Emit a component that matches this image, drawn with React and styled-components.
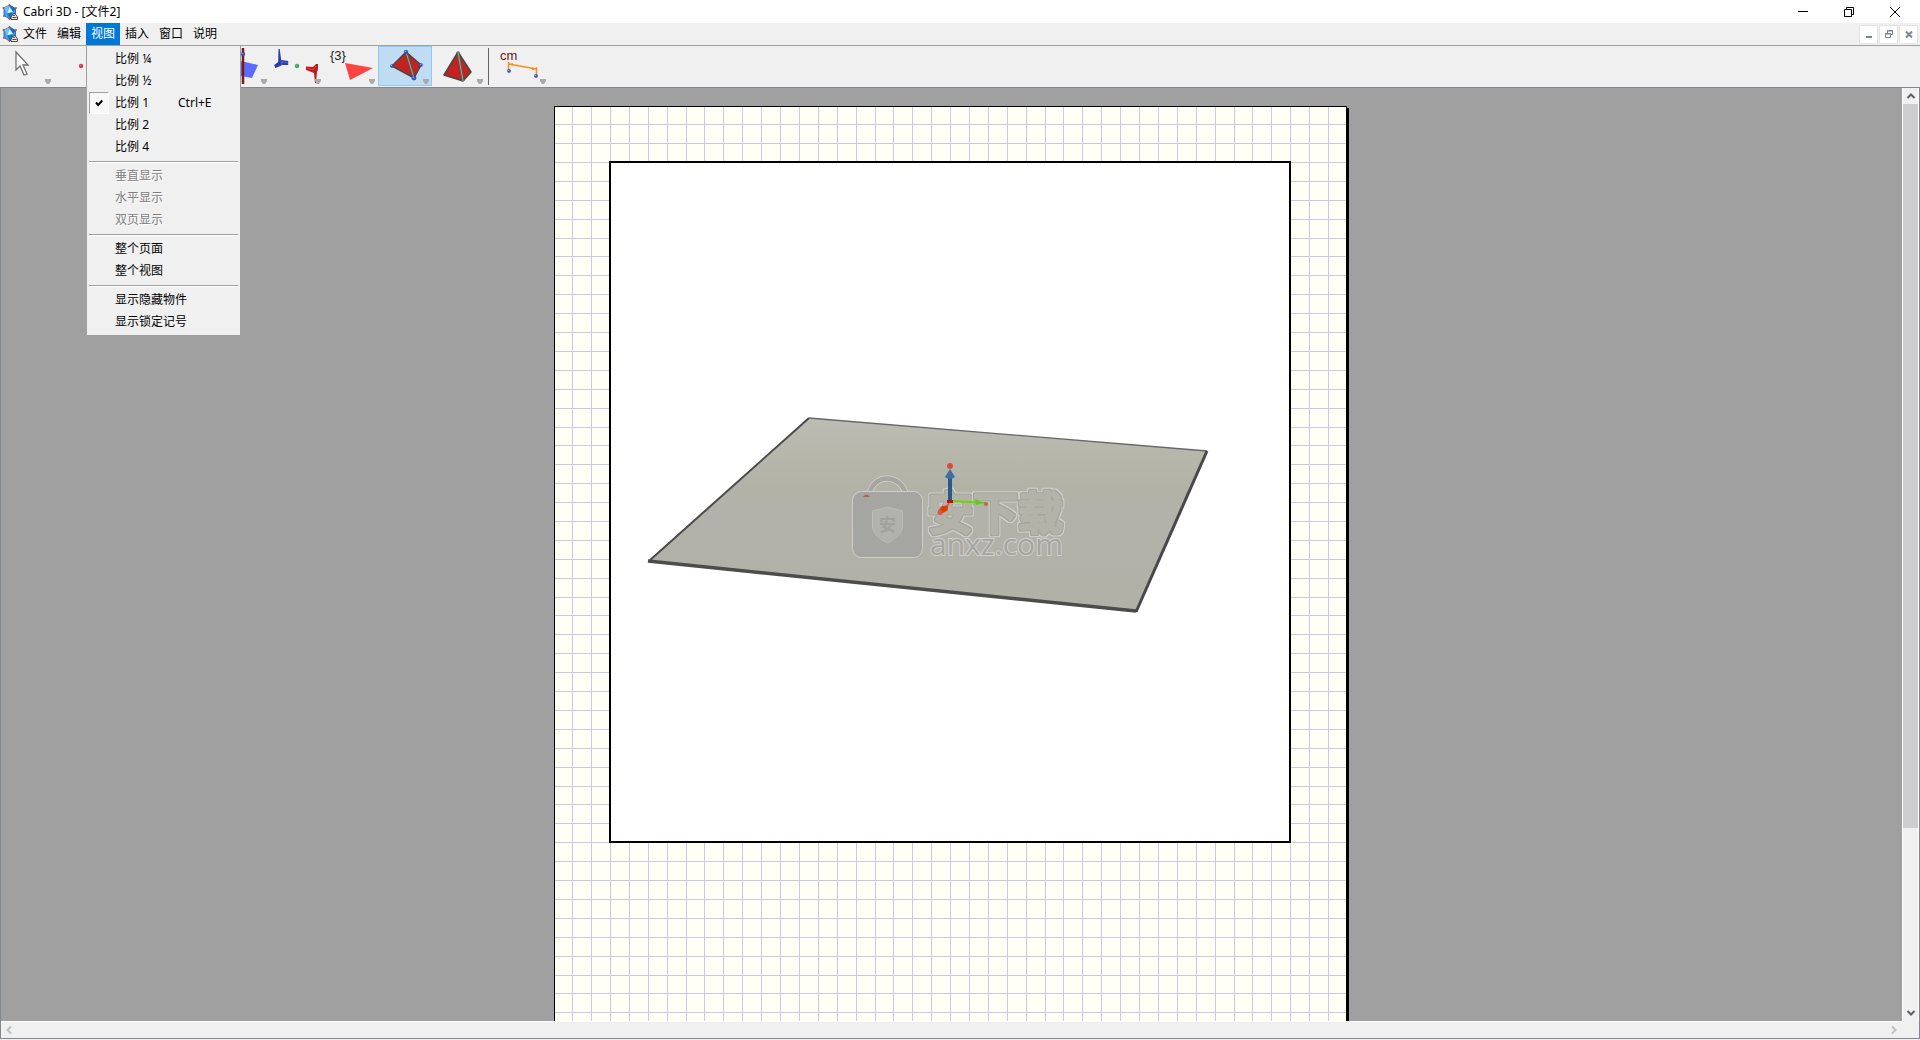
import React from "react";
import styled, { createGlobalStyle, css } from "styled-components";

const Global = createGlobalStyle`
  * { box-sizing: border-box; }
  body {
    margin: 0;
    background: #f0f0f0;
    color: #000;
    font: 12px/16px "Noto Sans", "Noto Sans CJK SC", sans-serif;
  }
  button {
    margin: 0;
    padding: 0;
    border: 0;
    background: none;
    color: inherit;
    font: inherit;
    text-align: left;
  }
`;

const Window = styled.div`
  display: flex;
  flex-direction: column;
  height: 100vh;
  padding-bottom: 1px;
  overflow: hidden;
`;

/* ---------- title bar ---------- */

const TitleBar = styled.header`
  display: flex;
  align-items: center;
  flex: none;
  height: 23px;
  padding: 0 2px;
  background: #fff;
`;

const Title = styled.h1`
  flex: 1;
  margin: 0 0 0 5px;
  font-size: 12px;
  font-weight: 400;
`;

const CaptionButton = styled.button`
  display: grid;
  place-items: center;
  width: 46px;
  height: 23px;
`;

/* ---------- menu bar ---------- */

const MenuBar = styled.nav`
  display: flex;
  align-items: center;
  flex: none;
  height: 23px;
  padding: 0 1px 0 2px;
  border-bottom: 1px solid #a0a0a0;
`;

const MenuSlot = styled.div`
  position: relative;
`;

const MenuTitle = styled.button`
  display: block;
  height: 22px;
  padding: 0 5px;
  background: ${(p) => (p.$open ? "#0078d7" : "transparent")};
  color: ${(p) => (p.$open ? "#fff" : "#000")};
`;

const Spacer = styled.div`
  flex: 1;
`;

const ChildButton = styled.button`
  display: grid;
  place-items: center;
  width: 19px;
  height: 19px;
  margin-right: 1px;
  border: 1px solid #e4e4e4;
  background: #fff;
`;

const Dropdown = styled.div`
  position: absolute;
  z-index: 10;
  top: 100%;
  left: 0;
  width: 155px;
  padding: 2px;
  border: 1px solid #a0a0a0;
  background: #f0f0f0;
`;

const MenuItem = styled.button`
  display: flex;
  align-items: center;
  width: 100%;
  height: 22px;
  color: ${(p) => (p.disabled ? "#808080" : "#000")};
  text-shadow: ${(p) => (p.disabled ? "1px 1px #fff" : "none")};
`;

const CheckCell = styled.span`
  display: grid;
  place-items: center;
  width: 20px;
  height: 22px;
  margin-right: 6px;
  border: 1px solid transparent;
  ${(p) =>
    p.$checked &&
    css`
      border-color: #a0a0a0 #fff #fff #a0a0a0;
      background: #f8f8f8;
    `}
`;

const ItemLabel = styled.span`
  width: 63px;
  white-space: nowrap;
`;

const Divider = styled.hr`
  height: 2px;
  margin: 3px 0 2px;
  border: 0;
  border-top: 1px solid #a0a0a0;
  background: #fff;
`;

/* ---------- tool bar ---------- */

const ToolBar = styled.div`
  display: flex;
  flex: none;
  height: 41px;
`;

const Tool = styled.button`
  width: 54px;
  height: 40px;
  border: 1px solid ${(p) => (p.$active ? "#90c8f6" : "transparent")};
  background: ${(p) => (p.$active ? "#c0dcf3" : "transparent")};

  svg {
    display: block;
    margin: -1px;
  }
`;

const ToolDivider = styled.div`
  width: 1px;
  height: 37px;
  margin: 2px 6px 0 2px;
  background: #646464;
`;

/* ---------- document area ---------- */

const Workspace = styled.main`
  display: grid;
  grid-template: minmax(0, 1fr) 17px / minmax(0, 1fr) 17px;
  flex: 1;
  min-height: 0;
  border: 1px solid #828790;
`;

const Canvas = styled.section`
  padding: 18px 2px 0 0;
  overflow: hidden;
  background: #a0a0a0;
`;

const Paper = styled.div`
  display: grid;
  width: 793px;
  height: 1123px;
  margin: 0 auto;
  border: 1px solid #000;
  background: #fffff5;
  box-shadow: 2px 2px #000;
`;

const GridLines = styled.svg`
  grid-area: 1 / 1;
`;

const View = styled.div`
  grid-area: 1 / 1;
  width: 682px;
  height: 682px;
  margin: 54px 0 0 54px;
  border: 2px solid #000;
  background: #fff;

  svg {
    display: block;
  }
`;

const ScrollBar = styled.div`
  display: flex;
  flex-direction: ${(p) => (p.$vertical ? "column" : "row")};
  border: 0 solid #fff;
  border-width: ${(p) => (p.$vertical ? "0 1px 0 1px" : "1px 0 0 0")};
`;

const ScrollArrow = styled.button`
  display: grid;
  place-items: center;
  flex: none;
  width: 16px;
  height: 16px;
  color: ${(p) => (p.disabled ? "#bfbfbf" : "#606060")};
`;

const Track = styled.div`
  display: flex;
  flex-direction: column;
  flex: 1;
`;

const Thumb = styled.div`
  flex: ${(p) => p.$visible};
  background: #cdcdcd;
`;

const Rest = styled.div`
  flex: ${(p) => p.$hidden};
`;

/* ---------- drawings ---------- */

const AppIcon = () => (
  <svg width="16" height="16" viewBox="0 0 16 16" aria-hidden="true">
    <path d="M7.500 1 13.500 4.500V11L7.500 15 2 11.500V4z" fill="#3fa3e6" stroke="#2477b5" strokeWidth="1" />
    <path d="M7.500 1 2 4 5 9z" fill="#6cc3f5" />
    <path d="M7.500 1 13.500 4.500 11 8z" fill="#1c63b8" />
    <path d="M7.500 3 11 8 5 9.500z" fill="#d9f2ff" />
    <path d="M5 9.500 11 8 8 15z" fill="#1d6fca" />
    <g fill="#d3462f">
      <circle cx="7.500" cy="1" r="1" /><circle cx="1.500" cy="4" r="1" /><circle cx="14" cy="4" r="1" />
      <circle cx="2" cy="12" r="1" /><circle cx="7.500" cy="15" r="1" />
    </g>
    <path d="M9 15.500V13l2-3 2-.5 2.500 3.500v2.500z" fill="#f5edcf" stroke="#222" strokeWidth=".8" />
    <path d="M11 11.500h2M10.500 13.500h4" stroke="#222" strokeWidth=".8" />
  </svg>
);

const Marker = () => <path d="M45 33h6v2l-2 3h-2l-2-3z" fill="#aaa" />;

const ToolDrawing = ({ children }) => (
  <svg width="54" height="40" viewBox="0 0 54 40" aria-hidden="true">
    {children}
    <Marker />
  </svg>
);

const Ball = ({ x, y, r = 2, fill = "#3d55d8" }) => (
  <>
    <circle cx={x} cy={y} r={r} fill={fill} stroke="#223" strokeOpacity=".35" strokeWidth=".6" />
    <circle cx={x - r / 3} cy={y - r / 3} r={r / 3} fill="#fff" fillOpacity=".5" />
  </>
);

const drawings = {
  pointer: (
    <path d="M16 6v18l4-4 4 9 3-1-4-9h5z" fill="#fff" stroke="#707070" strokeWidth="1.300" />
  ),
  point: <Ball x={27} y={20} fill="#e03030" />,
  plane: (
    <>
      <path d="M16 13l26 6-6 13-22-4z" fill="#5a6cff" />
      <path d="M27 2v36" stroke="#801818" strokeWidth="2.500" />
      <Ball x={27} y={8} />
    </>
  ),
  transform: (
    <>
      <path d="M8.500 3l1.200 0 1.500 11 7 1v4l-6 0-4 2-3 1-1-3 4-3z" fill="#2b3da8" />
      <path d="M11 14l1 5M12 16l6 1" stroke="#4a66dc" strokeWidth="1" />
      <Ball x={27} y={20} fill="#2fae4c" />
      <path d="M36 20.500l7 .5 3-3h2v5l-1 3-1 11h-1l-1-10-8-3z" fill="#bd1c1c" />
      <path d="M37 22l6 2 3-4" fill="none" stroke="#e84040" />
    </>
  ),
  polygon: (
    <>
      <text x="6" y="14" fontFamily="Liberation Sans, sans-serif" fontSize="13" fill="#222">
        {"{3}"}
      </text>
      <path d="M21 17l28 5-23 12z" fill="#ff4343" />
    </>
  ),
  tetrahedron: (
    <>
      <path d="M28 6 14 20 36 32 43 19z" fill="#c42222" stroke="#484840" strokeWidth="1.500" />
      <path d="M28 6 36 32" stroke="#55554c" strokeWidth="3" />
      <path d="M28 6 36 32" stroke="#aaa9a0" strokeWidth="1" />
      <Ball x={28} y={6} /><Ball x={14} y={20} r={1.7} /><Ball x={43} y={19} r={1.7} /><Ball x={36} y={32} r={2.3} />
    </>
  ),
  pyramid: (
    <>
      <path d="M26 6 12 29 31 35 39 26z" fill="#c42222" stroke="#484840" strokeWidth="1.500" strokeLinejoin="round" />
      <path d="M26 6 31 35" stroke="#55554c" strokeWidth="3" />
      <path d="M26 6 31 35" stroke="#aaa9a0" strokeWidth="1" />
    </>
  ),
  measure: (
    <>
      <text x="5" y="14" fontFamily="Liberation Sans, sans-serif" fontSize="13" fill="#701010">
        cm
      </text>
      <path d="M13.500 16v8M41.500 21v8M14 18l27 5" fill="none" stroke="#ff8c1a" strokeWidth="1.500" />
      <path d="M14 18l4-1v3zM41 23l-4-2v3z" fill="#ff8c1a" />
      <Ball x={14} y={25} r={1.8} /><Ball x={41} y={30} r={1.8} />
    </>
  ),
};

const Chevron = ({ turn }) => (
  <svg width="10" height="10" viewBox="0 0 10 10" aria-hidden="true">
    <path d="M1.500 7 5 3.500 8.500 7" fill="none" stroke="currentColor" strokeWidth="2" transform={`rotate(${turn} 5 5)`} />
  </svg>
);

const PITCH = 18.898;
const lineAt = (n) => Math.floor(PITCH * n - 0.25) - 0.5;

const PaperGrid = () => {
  const columns = Array.from({ length: 41 }, (_, i) => lineAt(i + 1));
  const rows = Array.from({ length: 59 }, (_, i) => lineAt(i + 1));
  return (
    <GridLines width="791" height="1121" viewBox="0 0 791 1121" stroke="#cacae4" aria-hidden="true">
      {columns.map((x) => <path key={`c${x}`} d={`M${x} 0V1121`} />)}
      {rows.map((y) => <path key={`r${y}`} d={`M0 ${y}H791`} />)}
    </GridLines>
  );
};

const Watermark = () => (
  <g>
    <filter id="rim" x="-5%" y="-20%" width="110%" height="140%" colorInterpolationFilters="sRGB">
      <feMorphology in="SourceAlpha" operator="dilate" radius="2" result="wide" />
      <feFlood floodColor="#d0d0ca" />
      <feComposite in2="wide" operator="in" result="light" />
      <feMorphology in="SourceAlpha" operator="dilate" radius="1" result="narrow" />
      <feFlood floodColor="#a3a49f" />
      <feComposite in2="narrow" operator="in" result="dark" />
      <feMerge>
        <feMergeNode in="light" />
        <feMergeNode in="dark" />
        <feMergeNode in="SourceGraphic" />
      </feMerge>
    </filter>
    <path d="M870 492C875 474 899 474 905 492" fill="none" stroke="#d4d4ce" strokeWidth="6" />
    <path d="M870 492C875 474 899 474 905 492" fill="none" stroke="#a5a6a1" strokeWidth="4.500" />
    <rect x="852.500" y="491.500" width="70" height="66" rx="9" fill="#a5a6a1" stroke="#cfcfca" />
    <path d="M887.500 507l15 4v17q-2 9-15 15-13-6-15-15v-17z" fill="#b2b2ad" stroke="#bcbcb8" />
    <text x="887.500" y="531" textAnchor="middle" fontFamily="Noto Sans CJK SC, sans-serif" fontSize="17" fontWeight="700" fill="#a0a19c">
      安
    </text>
    <text
      x="928" y="530" fontFamily="Noto Sans CJK SC, sans-serif" fontSize="45" fontWeight="500"
      fill="#b3b3aa" stroke="#b3b3aa" strokeWidth="3" strokeLinejoin="round" filter="url(#rim)"
    >
      安下载
    </text>
    <text
      x="930" y="555" fontFamily="Open Sans, sans-serif" fontSize="30"
      fill="#a5a6a1" stroke="#d0d0ca" strokeWidth="2" paintOrder="stroke"
    >
      anxz.com
    </text>
  </g>
);

const Scene = () => (
  <svg width="678" height="678" viewBox="611 163 678 678" role="img" aria-label="3D">
    <defs>
      <linearGradient id="ground" gradientUnits="userSpaceOnUse" x1="0" y1="418" x2="0" y2="612">
        <stop offset="0" stopColor="#bcbcb3" />
        <stop offset=".35" stopColor="#b3b2a6" />
        <stop offset=".41" stopColor="#b3b2a7" />
        <stop offset=".45" stopColor="#b2b2aa" />
        <stop offset="1" stopColor="#b1b1a8" />
      </linearGradient>
    </defs>
    <path d="M809 418 1207 451 1136 611 649 561z" fill="url(#ground)" />
    <path d="M809 418 1207 451" stroke="#66666a" strokeWidth="1.300" />
    <path d="M809 418 649 561" stroke="#4a4a4a" strokeWidth="2" />
    <path d="M648 561 1136 611" stroke="#4c4c4a" strokeWidth="3.500" />
    <path d="M1136 612 1207 451" stroke="#484848" strokeWidth="3" />
    <Watermark />
    <path d="M863 497q3-5 7 0z" fill="#b85c5c" />
    <path d="M953 501 986 503" stroke="#66d800" strokeWidth="2" />
    <path d="M975 499l8 4-7 2z" fill="#62c814" />
    <circle cx="986" cy="504" r="2" fill="#c96448" />
    <path d="M950 478v23" stroke="#2b5a88" strokeWidth="4" />
    <path d="M950 469l5 8q-5 4-10 0z" fill="#3a6ea5" />
    <circle cx="950" cy="466" r="3" fill="#d8503a" />
    <path d="M949 503l-3 5" stroke="#d86848" strokeWidth="2" />
    <path d="M938 511l4-5 6-.5-.5 5-7.500 4z" fill="#d83c08" />
    <circle cx="940" cy="512.500" r="2.500" fill="#d8583c" />
    <path d="M947 500h6v3h-6z" fill="#c80c0c" />
  </svg>
);

/* ---------- data ---------- */

const viewMenu = [
  [
    { label: "比例 ¼" },
    { label: "比例 ½" },
    { label: "比例 1", keys: "Ctrl+E", checked: true },
    { label: "比例 2" },
    { label: "比例 4" },
  ],
  [
    { label: "垂直显示", disabled: true },
    { label: "水平显示", disabled: true },
    { label: "双页显示", disabled: true },
  ],
  [{ label: "整个页面" }, { label: "整个视图" }],
  [{ label: "显示隐藏物件" }, { label: "显示锁定记号" }],
];

const menus = ["文件", "编辑", "视图", "插入", "窗口", "说明"];
const tools = ["pointer", "point", "curve", "surface", "plane", "transform", "polygon", "tetrahedron", "pyramid"];

const ViewMenu = () => (
  <Dropdown role="menu">
    {viewMenu.map((group, i) => (
      <React.Fragment key={i}>
        {i > 0 && <Divider />}
        {group.map((item) => (
          <MenuItem key={item.label} role="menuitem" disabled={item.disabled}>
            <CheckCell $checked={item.checked}>
              {item.checked && (
                <svg width="8" height="8" viewBox="0 0 8 8" aria-hidden="true">
                  <path d="M1 3.500l2.200 2.500L7.300 1.500" fill="none" stroke="#000" strokeWidth="2" />
                </svg>
              )}
            </CheckCell>
            <ItemLabel>{item.label}</ItemLabel>
            {item.keys}
          </MenuItem>
        ))}
      </React.Fragment>
    ))}
  </Dropdown>
);

export default function App() {
  return (
    <Window>
      <Global />
      <TitleBar>
        <AppIcon />
        <Title>Cabri 3D - [文件2]</Title>
        <CaptionButton aria-label="minimize">
          <svg width="10" height="10" viewBox="0 0 10 10"><path d="M0 4.500h10" stroke="#000" /></svg>
        </CaptionButton>
        <CaptionButton aria-label="restore">
          <svg width="10" height="10" viewBox="0 0 10 10" fill="none" stroke="#000">
            <path d="M.5 2.500h7v7h-7zM2.500 2.500v-2h7v7h-2" />
          </svg>
        </CaptionButton>
        <CaptionButton aria-label="close">
          <svg width="10" height="10" viewBox="0 0 10 10"><path d="M0 0l10 10M10 0L0 10" stroke="#000" /></svg>
        </CaptionButton>
      </TitleBar>

      <MenuBar>
        <AppIcon />
        {menus.map((name) => (
          <MenuSlot key={name}>
            <MenuTitle $open={name === "视图"}>{name}</MenuTitle>
            {name === "视图" && <ViewMenu />}
          </MenuSlot>
        ))}
        <Spacer />
        <ChildButton aria-label="minimize document">
          <svg width="10" height="10" viewBox="0 0 10 10"><path d="M2 8h6" stroke="#768696" strokeWidth="2" /></svg>
        </ChildButton>
        <ChildButton aria-label="restore document">
          <svg width="10" height="10" viewBox="0 0 10 10" fill="none" stroke="#768696">
            <path d="M1.500 4.500h5v4h-5zM1 5h6M3.500 4V1.500h5v4H7M3 2h6" />
          </svg>
        </ChildButton>
        <ChildButton aria-label="close document">
          <svg width="10" height="10" viewBox="0 0 10 10"><path d="M2 2.500l6 6M8 2.500l-6 6" stroke="#768696" strokeWidth="2" /></svg>
        </ChildButton>
      </MenuBar>

      <ToolBar role="toolbar">
        {tools.map((name) => (
          <Tool key={name} aria-label={name} $active={name === "tetrahedron"}>
            <ToolDrawing>{drawings[name]}</ToolDrawing>
          </Tool>
        ))}
        <ToolDivider />
        <Tool aria-label="measure">
          <ToolDrawing>{drawings.measure}</ToolDrawing>
        </Tool>
      </ToolBar>

      <Workspace>
        <Canvas>
          <Paper>
            <PaperGrid />
            <View><Scene /></View>
          </Paper>
        </Canvas>
        <ScrollBar $vertical>
          <ScrollArrow aria-label="scroll up"><Chevron turn={0} /></ScrollArrow>
          <Track>
            <Thumb $visible={41} />
            <Rest $hidden={10} />
          </Track>
          <ScrollArrow aria-label="scroll down"><Chevron turn={180} /></ScrollArrow>
        </ScrollBar>
        <ScrollBar>
          <ScrollArrow disabled aria-label="scroll left"><Chevron turn={270} /></ScrollArrow>
          <Track />
          <ScrollArrow disabled aria-label="scroll right"><Chevron turn={90} /></ScrollArrow>
        </ScrollBar>
      </Workspace>
    </Window>
  );
}
